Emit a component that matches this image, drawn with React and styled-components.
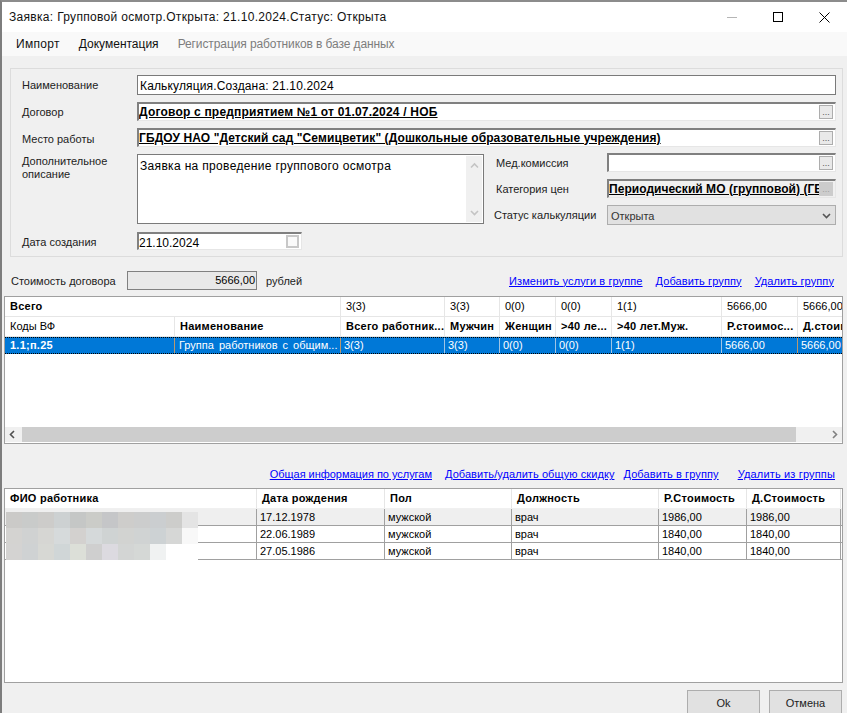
import React from 'react'
import styled, { createGlobalStyle } from 'styled-components'

const GlobalStyle = createGlobalStyle`
    html, body {
        margin: 0;
        padding: 0;
        background: #f0f0f0;
    }
    body {
        font-family: "Liberation Sans", Arial, sans-serif;
        font-size: 11px;
        color: #000;
    }
`

const Window = styled.div`
    width: 847px;
    height: 713px;
    box-sizing: border-box;
    overflow: hidden;
    display: flex;
    flex-direction: column;
    background: #f0f0f0;
    border-top: 2px solid #8c8c8c;
    border-left: 2px solid #7d7d7d;
`

const TitleBar = styled.div`
    height: 30px;
    flex: none;
    display: flex;
    align-items: center;
    background: #fff;
    padding-left: 7px;
`

const TitleText = styled.div`
    flex: 1;
    font-size: 12px;
    letter-spacing: 0.31px;
    color: #111;
`

const WinButtons = styled.div`
    display: flex;
    align-items: center;
    gap: 35px;
    padding-right: 17px;
`

const WinIcon = styled.svg`
    width: 11px;
    height: 11px;
    display: block;
`

const MenuBar = styled.div`
    height: 24px;
    flex: none;
    display: flex;
    align-items: center;
    padding-left: 14px;
    background: #f9f9f9;
    font-size: 12px;
`

const MenuItem = styled.span`
    color: ${p => (p.$disabled ? '#7d7d7d' : '#111')};
    margin-right: ${p => p.$gap ?? 0}px;
    letter-spacing: ${p => p.$spacing ?? 0}px;
`

const GroupBox = styled.div`
    box-sizing: border-box;
    margin: 12px 4px 0 8px;
    height: 189px;
    flex: none;
    border: 1px solid #dcdcdc;
    padding: 6px 6px 0 11px;
    display: flex;
    flex-direction: column;
`

const FieldRow = styled.div`
    display: flex;
    align-items: flex-end;
    margin-bottom: ${p => p.$gap ?? 7}px;
`

const Label = styled.div`
    width: 115px;
    flex: none;
    line-height: 13px;
    padding-bottom: ${p => p.$pad ?? 3}px;
    color: #222;
`

const TextBox = styled.div`
    box-sizing: border-box;
    flex: 1;
    height: 20px;
    border: 1px solid #7a7a7a;
    background: #fff;
    padding-left: 2px;
    line-height: 21px;
    font-size: 12px;
    letter-spacing: 0.15px;
`

const Lookup = styled.div`
    box-sizing: border-box;
    flex: 1;
    min-width: 0;
    height: 19px;
    display: flex;
    align-items: center;
    justify-content: space-between;
    padding: 0 2px 0 0;
    background: ${p => (p.$disabled ? '#f0f0f0' : '#fff')};
    border-top: 2px solid #808080;
    border-left: 2px solid #808080;
    border-right: 1px solid #e6e6e6;
    border-bottom: 1px solid #e6e6e6;
`

const LookupValue = styled.span`
    font-size: 12px;
    font-weight: bold;
    letter-spacing: ${p => p.$spacing ?? 0.13}px;
    text-decoration: underline;
    white-space: nowrap;
    overflow: hidden;
    flex: 1;
    min-width: 0;
    line-height: 15px;
`

const DotsButton = styled.div`
    box-sizing: border-box;
    width: 14px;
    height: 14px;
    flex: none;
    border: 1px solid ${p => (p.$disabled ? '#cccccc' : '#adadad')};
    background: ${p => (p.$disabled ? '#cccccc' : '#e9e9e9')};
    color: ${p => (p.$disabled ? '#a0a0a0' : '#555')};
    font-size: 9px;
    line-height: 13px;
    text-align: center;
`

const MiddleRow = styled.div`
    display: flex;
    height: 70px;
    margin-bottom: 8px;
`

const DescriptionLabel = styled(Label)`
    padding-top: 1px;
`

const MemoBox = styled.div`
    box-sizing: border-box;
    width: 347px;
    height: 70px;
    flex: none;
    display: flex;
    border: 1px solid #7a7a7a;
    background: #fff;
`

const MemoText = styled.div`
    flex: 1;
    padding: 4px 2px;
    line-height: 14px;
    font-size: 12px;
    letter-spacing: 0.33px;
`

const MemoScroll = styled.div`
    width: 16px;
    margin: 1px;
    flex: none;
    background: #f0f0f0;
    display: flex;
    flex-direction: column;
    justify-content: space-between;
    align-items: center;
    padding: 5px 0;
    box-sizing: border-box;
`

const SideColumn = styled.div`
    flex: 1;
    min-width: 0;
    margin-left: 10px;
    margin-top: -1px;
    display: flex;
    flex-direction: column;
    gap: 7px;
`

const SideRow = styled.div`
    display: flex;
    align-items: center;
    min-width: 0;
`

const SideLabel = styled.div`
    width: ${p => p.$width}px;
    margin-left: ${p => p.$shift}px;
    flex: none;
    color: #222;
`

const SelectBox = styled.div`
    box-sizing: border-box;
    flex: 1;
    height: 20px;
    display: flex;
    align-items: center;
    justify-content: space-between;
    padding: 1px 4px 0 3px;
    border: 1px solid #adadad;
    background: #e1e1e1;
    color: #333;
`

const DateBox = styled.div`
    box-sizing: border-box;
    width: 165px;
    height: 18px;
    display: flex;
    align-items: center;
    justify-content: space-between;
    padding: 0 2px 0 0;
    background: #fff;
    font-size: 12px;
    border-top: 2px solid #808080;
    border-left: 2px solid #808080;
    border-right: 1px solid #e6e6e6;
    border-bottom: 1px solid #e6e6e6;
`

const DateValue = styled.span`
    padding-top: 2px;
`

const DateCheck = styled.div`
    box-sizing: border-box;
    width: 13px;
    height: 13px;
    border: 2px solid #c8c8c8;
    background: #fafafa;
`

const CostRow = styled.div`
    display: flex;
    align-items: center;
    height: 19px;
    margin: 14px 13px 0 9px;
    flex: none;
`

const CostLabel = styled.div`
    width: 116px;
    flex: none;
    color: #222;
`

const CostBox = styled.div`
    box-sizing: border-box;
    width: 130px;
    height: 19px;
    flex: none;
    border: 1px solid #808080;
    background: #e8e8e8;
    text-align: right;
    padding-right: 1px;
    line-height: 17px;
`

const CostUnit = styled.div`
    margin-left: 9px;
    color: #222;
`

const LinkBar = styled.div`
    display: flex;
    margin-left: auto;
    gap: 13px;
`

const ActionLink = styled.a`
    color: #0000ff;
    text-decoration: underline;
    white-space: nowrap;
    letter-spacing: ${p => p.$spacing ?? 0.1}px;
    margin-left: ${p => p.$shift ?? 0}px;
`

const GridFrame = styled.div`
    box-sizing: border-box;
    margin: ${p => p.$top}px 4px 0 2px;
    height: ${p => p.$height}px;
    flex: none;
    border: 1px solid #a0a0a0;
    background: #fff;
    position: relative;
    overflow: hidden;
    display: flex;
    flex-direction: column;
`

const GridRow = styled.div`
    box-sizing: border-box;
    display: grid;
    grid-template-columns: ${p => p.$cols};
    height: ${p => p.$height}px;
    flex: none;
    background: ${p => p.$bg ?? '#fff'};
    border-bottom: 1px solid ${p => p.$line ?? '#e6e6e6'};
`

const SelectedRow = styled(GridRow)`
    background: #0078d7;
    color: #fff;
    border-top: 1px dotted #000;
    border-bottom: 1px dotted #000;
`

const Cell = styled.div`
    box-sizing: border-box;
    grid-column: span ${p => p.$span ?? 1};
    padding-left: ${p => p.$pad ?? 5}px;
    border-right: 1px solid ${p => p.$line ?? '#e6e6e6'};
    font-weight: ${p => (p.$bold ? 'bold' : 'normal')};
    letter-spacing: ${p => (p.$bold ? 0.25 : 0)}px;
    word-spacing: ${p => p.$words ?? 0}px;
    line-height: ${p => p.$lh ?? 18}px;
    white-space: nowrap;
    overflow: hidden;
`

const HScroll = styled.div`
    margin-top: auto;
    margin-bottom: 1px;
    height: 15px;
    flex: none;
    display: flex;
    background: #f0f0f0;
`

const ScrollEnd = styled.div`
    width: ${p => p.$width}px;
    flex: none;
    display: flex;
    align-items: center;
    justify-content: ${p => p.$align};
    padding: 0 3px;
    box-sizing: border-box;
`

const ScrollThumb = styled.div`
    flex: 1;
    background: #cdcdcd;
`

const LowerLinks = styled.div`
    display: flex;
    justify-content: flex-end;
    margin: 23px 12px 0 0;
    line-height: 14px;
    flex: none;
`

const Mosaic = styled.div`
    position: absolute;
    left: 1px;
    top: 23px;
    display: flex;
    flex-direction: column;
`

const MosaicRow = styled.div`
    display: flex;
`

const MosaicTile = styled.div`
    width: 16px;
    height: 16px;
`

const Footer = styled.div`
    display: flex;
    justify-content: flex-end;
    gap: 9px;
    margin: 7px 5px 0 0;
    flex: none;
`

const FooterButton = styled.div`
    box-sizing: border-box;
    width: 73px;
    height: 26px;
    border: 1px solid #adadad;
    background: #e1e1e1;
    text-align: center;
    line-height: 24px;
    color: #222;
`

const Chevron = ({ dir, color = '#a6a6a6', size = 9 }) => {
    const points = {
        up: '1,6.5 4.5,3 8,6.5',
        down: '1,3 4.5,6.5 8,3',
        left: '6,1 2.5,4.5 6,8',
        right: '3,1 6.5,4.5 3,8',
    }
    return (
        <svg width={size} height={size} viewBox="0 0 9 9">
            <polyline points={points[dir]} fill="none" stroke={color} strokeWidth="1.6" />
        </svg>
    )
}

const groupCols = '170px 166px 104px 55px 56px 56px 110px 76px 80px'
const workerCols = '252px 128px 127px 147px 88px 94px'

const workers = [
    { date: '17.12.1978', price: '1986,00', bg: '#efefef' },
    { date: '22.06.1989', price: '1840,00' },
    { date: '27.05.1986', price: '1840,00' },
]

const mosaic = [
    ['#cbcac8', '#c9cbca', '#cdccca', '#cdd1d2', '#c5c7c6', '#cbccc8', '#c5c6c8', '#cecdcb', '#cccdcd', '#cbced0', '#cdcdcb', '#e4e4e4'],
    ['#d4d3d1', '#d0d2d2', '#d6d6d3', '#d6dadb', '#d3d1cf', '#d5d9da', '#cfd3d3', '#d2d3d1', '#d0d3d3', '#cdd2d4', '#d6d7d6', '#f8f8f8'],
    ['#d4d3d2', '#cfd2d3', '#d7d8d4', '#d0d6d7', '#dcdfd8', '#cfcfcf', '#dcdae0', '#d3d5d4', '#d5d8d6', '#f0f2f2', '#ffffff', '#ffffff'],
]

const App = () => {
    return (
        <Window>
            <GlobalStyle />
            <TitleBar>
                <TitleText>Заявка: Групповой осмотр.Открыта: 21.10.2024.Статус: Открыта</TitleText>
                <WinButtons>
                    <WinIcon viewBox="0 0 11 11">
                        <line x1="0" y1="5.5" x2="10" y2="5.5" stroke="#b5b5b5" />
                    </WinIcon>
                    <WinIcon viewBox="0 0 11 11">
                        <rect x="0.5" y="0.5" width="9" height="9" fill="none" stroke="#000" />
                    </WinIcon>
                    <WinIcon viewBox="0 0 11 11">
                        <path d="M0.5 0.5 L10.5 10.5 M10.5 0.5 L0.5 10.5" stroke="#000" />
                    </WinIcon>
                </WinButtons>
            </TitleBar>

            <MenuBar>
                <MenuItem $gap={19} $spacing={0.3}>Импорт</MenuItem>
                <MenuItem $gap={19}>Документация</MenuItem>
                <MenuItem $disabled $spacing={-0.1}>Регистрация работников в базе данных</MenuItem>
            </MenuBar>

            <GroupBox>
                <FieldRow>
                    <Label>Наименование</Label>
                    <TextBox>Калькуляция.Создана: 21.10.2024</TextBox>
                </FieldRow>
                <FieldRow>
                    <Label $pad={2}>Договор</Label>
                    <Lookup>
                        <LookupValue $spacing={0.2}>Договор с предприятием №1 от 01.07.2024 / НОБ</LookupValue>
                        <DotsButton>...</DotsButton>
                    </Lookup>
                </FieldRow>
                <FieldRow>
                    <Label $pad={1}>Место работы</Label>
                    <Lookup>
                        <LookupValue $spacing={0.1}>ГБДОУ НАО "Детский сад "Семицветик" (Дошкольные образовательные учреждения)</LookupValue>
                        <DotsButton>...</DotsButton>
                    </Lookup>
                </FieldRow>
                <MiddleRow>
                    <DescriptionLabel>Дополнительное<br />описание</DescriptionLabel>
                    <MemoBox>
                        <MemoText>Заявка на проведение группового осмотра</MemoText>
                        <MemoScroll>
                            <Chevron dir="up" color="#c4c4c4" />
                            <Chevron dir="down" color="#c4c4c4" />
                        </MemoScroll>
                    </MemoBox>
                    <SideColumn>
                        <SideRow>
                            <SideLabel $width={111} $shift={2}>Мед.комиссия</SideLabel>
                            <Lookup>
                                <LookupValue />
                                <DotsButton>...</DotsButton>
                            </Lookup>
                        </SideRow>
                        <SideRow>
                            <SideLabel $width={111} $shift={2}>Категория цен</SideLabel>
                            <Lookup $disabled>
                                <LookupValue $spacing={0.05}>Периодический МО (групповой) (ГБ</LookupValue>
                                <DotsButton $disabled>...</DotsButton>
                            </Lookup>
                        </SideRow>
                        <SideRow>
                            <SideLabel $width={113} $shift={0}>Статус калькуляции</SideLabel>
                            <SelectBox>
                                Открыта
                                <Chevron dir="down" color="#555" />
                            </SelectBox>
                        </SideRow>
                    </SideColumn>
                </MiddleRow>
                <FieldRow $gap={0}>
                    <Label $pad={1}>Дата создания</Label>
                    <DateBox>
                        <DateValue>21.10.2024</DateValue>
                        <DateCheck />
                    </DateBox>
                </FieldRow>
            </GroupBox>

            <CostRow>
                <CostLabel>Стоимость договора</CostLabel>
                <CostBox>5666,00</CostBox>
                <CostUnit>рублей</CostUnit>
                <LinkBar>
                    <ActionLink href="#">Изменить услуги в группе</ActionLink>
                    <ActionLink href="#">Добавить группу</ActionLink>
                    <ActionLink href="#">Удалить группу</ActionLink>
                </LinkBar>
            </CostRow>

            <GridFrame $top={6} $height={148}>
                <GridRow $cols={groupCols} $height={20}>
                    <Cell $span={2} $bold>Всего</Cell>
                    <Cell>3(3)</Cell>
                    <Cell>3(3)</Cell>
                    <Cell>0(0)</Cell>
                    <Cell>0(0)</Cell>
                    <Cell>1(1)</Cell>
                    <Cell>5666,00</Cell>
                    <Cell>5666,00</Cell>
                </GridRow>
                <GridRow $cols={groupCols} $height={20}>
                    <Cell>Коды ВФ</Cell>
                    <Cell $bold>Наименование</Cell>
                    <Cell $bold>Всего работник...</Cell>
                    <Cell $bold>Мужчин</Cell>
                    <Cell $bold>Женщин</Cell>
                    <Cell $bold>&gt;40 ле...</Cell>
                    <Cell $bold>&gt;40 лет.Муж.</Cell>
                    <Cell $bold>Р.стоимос...</Cell>
                    <Cell $bold>Д.стоимость</Cell>
                </GridRow>
                <SelectedRow $cols={groupCols} $height={17}>
                    <Cell $bold $lh={15} $pad={5} $line="#b9986f">1.1;п.25</Cell>
                    <Cell $words={2} $lh={15} $pad={4} $line="#b9986f">Группа работников с общим...</Cell>
                    <Cell $lh={15} $pad={3} $line="#9fc4e4">3(3)</Cell>
                    <Cell $lh={15} $pad={3} $line="#9fc4e4">3(3)</Cell>
                    <Cell $lh={15} $pad={3} $line="#9fc4e4">0(0)</Cell>
                    <Cell $lh={15} $pad={3} $line="#9fc4e4">0(0)</Cell>
                    <Cell $lh={15} $pad={3} $line="#9fc4e4">1(1)</Cell>
                    <Cell $lh={15} $pad={3} $line="#b9986f">5666,00</Cell>
                    <Cell $lh={15} $pad={3} $line="#b9986f">5666,00</Cell>
                </SelectedRow>
                <HScroll>
                    <ScrollEnd $width={17} $align="flex-start">
                        <Chevron dir="left" color="#505050" />
                    </ScrollEnd>
                    <ScrollThumb />
                    <ScrollEnd $width={46} $align="flex-end">
                        <Chevron dir="right" color="#808080" />
                    </ScrollEnd>
                </HScroll>
            </GridFrame>

            <LowerLinks>
                <ActionLink href="#" $spacing={-0.03}>Общая информация по услугам</ActionLink>
                <ActionLink href="#" $shift={13} $spacing={0.07}>Добавить/удалить общую скидку</ActionLink>
                <ActionLink href="#" $shift={9} $spacing={0.1}>Добавить в группу</ActionLink>
                <ActionLink href="#" $shift={19} $spacing={0.16}>Удалить из группы</ActionLink>
            </LowerLinks>

            <GridFrame $top={7} $height={195}>
                <GridRow $cols={workerCols} $height={20} $line="#f0f0f0">
                    <Cell $bold>ФИО работника</Cell>
                    <Cell $bold>Дата рождения</Cell>
                    <Cell $bold>Пол</Cell>
                    <Cell $bold>Должность</Cell>
                    <Cell $bold>Р.Стоимость</Cell>
                    <Cell $bold>Д.Стоимость</Cell>
                </GridRow>
                {workers.map(w => (
                    <GridRow key={w.date} $cols={workerCols} $height={17} $bg={w.bg} $line="#a0a0a0">
                        <Cell $lh={16} $line="#a0a0a0" />
                        <Cell $lh={16} $pad={3} $line="#a0a0a0">{w.date}</Cell>
                        <Cell $lh={16} $pad={3} $line="#a0a0a0">мужской</Cell>
                        <Cell $lh={16} $pad={3} $line="#a0a0a0">врач</Cell>
                        <Cell $lh={16} $pad={3} $line="#a0a0a0">{w.price}</Cell>
                        <Cell $lh={16} $pad={3} $line="#a0a0a0">{w.price}</Cell>
                    </GridRow>
                ))}
                <Mosaic>
                    {mosaic.map((row, i) => (
                        <MosaicRow key={i}>
                            {row.map((colour, j) => (
                                <MosaicTile key={j} style={{ background: colour }} />
                            ))}
                        </MosaicRow>
                    ))}
                </Mosaic>
            </GridFrame>

            <Footer>
                <FooterButton>Ok</FooterButton>
                <FooterButton>Отмена</FooterButton>
            </Footer>
        </Window>
    )
}

export default App
